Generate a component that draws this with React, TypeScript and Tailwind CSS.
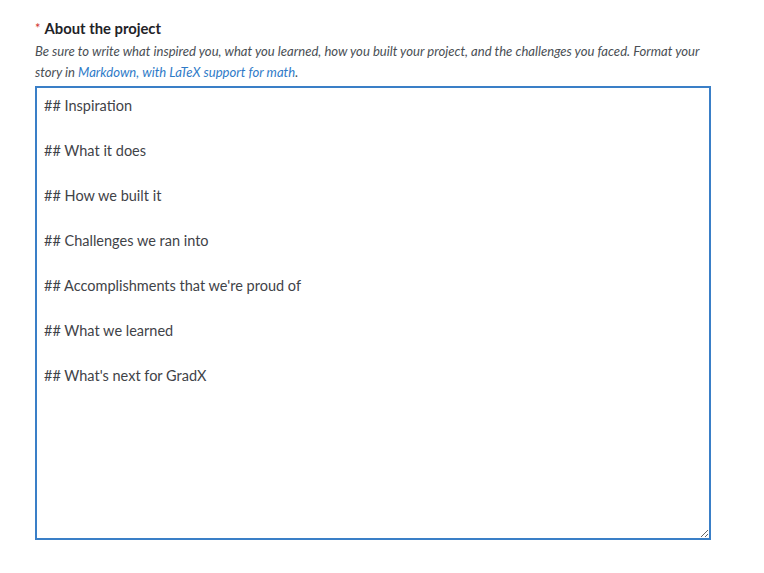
import { useState } from "react";

const STORY = [
  "## Inspiration",
  "",
  "## What it does",
  "",
  "## How we built it",
  "",
  "## Challenges we ran into",
  "",
  "## Accomplishments that we're proud of",
  "",
  "## What we learned",
  "",
  "## What's next for GradX",
].join("\n");

export default function App() {
  const [story, setStory] = useState(STORY);

  return (
    <div
      className="min-h-screen bg-white pl-[35px] pt-[17px]"
      style={{ fontFamily: 'Lato, "Noto Sans", sans-serif' }}
    >
      <div className="w-[676px]">
        {/* Label */}
        <div className="flex items-center gap-[4px] text-[14.8px] font-bold leading-[22px] text-[#1f2328]">
          <span className="text-[#d0312d] text-[13px] font-normal">*</span>
          <span>About the project</span>
        </div>

        {/* Help text */}
        <p className="mt-[2px] text-[13.1px] italic leading-[21px] text-[#4a4f55]">
          Be sure to write what inspired you, what you learned, how you built
          your project, and the challenges you faced. Format your story in{" "}
          <a href="#" className="text-[#2f7bc8]">
            Markdown, with LaTeX support for math
          </a>
          .
        </p>

        {/* Editor */}
        <textarea
          value={story}
          onChange={(e) => setStory(e.target.value)}
          className="mt-[3px] block w-full h-[454px] resize-y border-2 border-[#3a7fc7] px-[7px] pt-[7px] pb-[6px] text-[14.5px] leading-[22.5px] text-[#3f4348] outline-none"
        />
      </div>
    </div>
  );
}
